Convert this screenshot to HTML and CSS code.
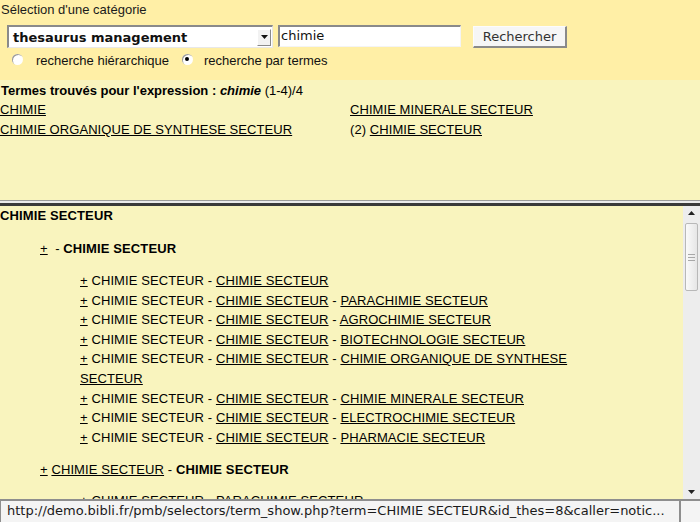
FILE: index.html
```html
<!DOCTYPE html>
<html lang="fr">
<head>
<meta charset="utf-8">
<title>Sélection</title>
<link rel="stylesheet" href="styles.css">
</head>
<body>
<div class="page">
  <div class="top">
    <div class="label">Sélection d'une catégorie</div>
    <div class="form-row">
      <div class="select">
        <span class="select-text">thesaurus management</span>
        <span class="drop"><svg width="7" height="4" viewBox="0 0 7 4"><path d="M0 0H7L3.5 4Z" fill="#111"/></svg></span>
      </div>
      <div class="input">chimie</div>
      <div class="button">Rechercher</div>
    </div>
    <div class="radio-row">
      <span class="radio"></span><span class="radio-label">recherche hiérarchique</span>
      <span class="radio checked"></span><span class="radio-label second">recherche par termes</span>
    </div>
  </div>

  <div class="middle">
    <div class="found"><b>Termes trouvés pour l'expression : <i>chimie</i></b> (1-4)/4</div>
    <div class="results">
      <div class="cell"><a href="#">CHIMIE</a></div>
      <div class="cell"><a href="#">CHIMIE MINERALE SECTEUR</a></div>
      <div class="cell"><a href="#">CHIMIE ORGANIQUE DE SYNTHESE SECTEUR</a></div>
      <div class="cell">(2) <a href="#">CHIMIE SECTEUR</a></div>
    </div>
  </div>

  <div class="sep"></div>

  <div class="bottom">
    <div class="content">
      <div class="head"><b>CHIMIE SECTEUR</b></div>
      <div class="l1"><a href="#">+</a>&nbsp; - <b>CHIMIE SECTEUR</b></div>
      <div class="l2">
        <div><a href="#">+</a> CHIMIE SECTEUR - <a href="#">CHIMIE SECTEUR</a></div>
        <div><a href="#">+</a> CHIMIE SECTEUR - <a href="#">CHIMIE SECTEUR</a> - <a href="#">PARACHIMIE SECTEUR</a></div>
        <div><a href="#">+</a> CHIMIE SECTEUR - <a href="#">CHIMIE SECTEUR</a> - <a href="#">AGROCHIMIE SECTEUR</a></div>
        <div><a href="#">+</a> CHIMIE SECTEUR - <a href="#">CHIMIE SECTEUR</a> - <a href="#">BIOTECHNOLOGIE SECTEUR</a></div>
        <div><a href="#">+</a> CHIMIE SECTEUR - <a href="#">CHIMIE SECTEUR</a> - <a href="#">CHIMIE ORGANIQUE DE SYNTHESE SECTEUR</a></div>
        <div><a href="#">+</a> CHIMIE SECTEUR - <a href="#">CHIMIE SECTEUR</a> - <a href="#">CHIMIE MINERALE SECTEUR</a></div>
        <div><a href="#">+</a> CHIMIE SECTEUR - <a href="#">CHIMIE SECTEUR</a> - <a href="#">ELECTROCHIMIE SECTEUR</a></div>
        <div><a href="#">+</a> CHIMIE SECTEUR - <a href="#">CHIMIE SECTEUR</a> - <a href="#">PHARMACIE SECTEUR</a></div>
      </div>
      <div class="l1 next"><a href="#">+</a> <a href="#">CHIMIE SECTEUR</a> - <b>CHIMIE SECTEUR</b></div>
      <div class="l2 next">
        <div><a href="#">+</a> CHIMIE SECTEUR - <a href="#">PARACHIMIE SECTEUR</a></div>
        <div><a href="#">+</a> CHIMIE SECTEUR - <a href="#">AGROCHIMIE SECTEUR</a></div>
      </div>
    </div>
    <div class="scrollbar">
      <div class="arrow"><svg width="7" height="4" viewBox="0 0 7 4"><path d="M0 4H7L3.5 0Z" fill="#222"/></svg></div>
      <div class="track">
        <div class="thumb"><span class="grip"></span><span class="grip"></span><span class="grip"></span></div>
      </div>
      <div class="arrow"><svg width="7" height="4" viewBox="0 0 7 4"><path d="M0 0H7L3.5 4Z" fill="#222"/></svg></div>
    </div>
  </div>

  <div class="status">
    <div class="status-text">http://demo.bibli.fr/pmb/selectors/term_show.php?term=CHIMIE SECTEUR&amp;id_thes=8&amp;caller=notic...</div>
    <div class="status-box"></div>
  </div>
</div>
</body>
</html>
```

FILE: styles.css
```css
html, body {
  margin: 0;
  padding: 0;
}

body {
  font-family: "Liberation Sans", Arial, sans-serif;
  font-size: 13px;
  color: #000;
}

a {
  color: #000;
  text-decoration: underline;
}

.page {
  width: 700px;
  height: 522px;
  overflow: hidden;
  display: flex;
  flex-direction: column;
}

/* ---------- top frame ---------- */
.top {
  height: 80px;
  flex: none;
  background: #ffefa6;
  box-sizing: border-box;
  padding-top: 2px;
}

.label {
  line-height: 16px;
  padding-left: 1px;
  color: #1a1a1a;
}

.form-row {
  display: flex;
  align-items: flex-start;
  margin-top: 7px;
  padding-left: 7px;
}

.select {
  width: 266px;
  height: 23px;
  box-sizing: border-box;
  background: #fff;
  border-top: 2px solid #8a8a8a;
  border-left: 2px solid #8a8a8a;
  border-right: 1px solid #e8e8e8;
  border-bottom: 1px solid #e8e8e8;
  display: flex;
  align-items: center;
  justify-content: space-between;
  font-family: "DejaVu Sans", sans-serif;
  font-weight: bold;
  font-size: 13px;
  color: #111;
}

.select-text {
  padding-left: 4px;
}

.drop {
  width: 14px;
  height: 17px;
  margin-right: 1px;
  box-sizing: border-box;
  background: #f2f2f2;
  border-top: 1px solid #fff;
  border-left: 1px solid #fff;
  border-right: 1px solid #8a8a8a;
  border-bottom: 1px solid #8a8a8a;
  display: flex;
  align-items: center;
  justify-content: center;
}

.input {
  width: 183px;
  height: 22px;
  margin-left: 5px;
  box-sizing: border-box;
  background: #fff;
  border-top: 2px solid #8a8a8a;
  border-left: 2px solid #8a8a8a;
  border-right: 1px solid #f4f4f4;
  border-bottom: 1px solid #f4f4f4;
  font-family: "DejaVu Sans", sans-serif;
  font-size: 13px;
  line-height: 18px;
  padding-left: 1px;
  color: #111;
}

.button {
  width: 94px;
  height: 22px;
  margin-left: 12px;
  margin-top: 1px;
  box-sizing: border-box;
  background: #f6f6f6;
  border-top: 1px solid #fcfcfc;
  border-left: 1px solid #fcfcfc;
  border-right: 2px solid #8a8a8a;
  border-bottom: 2px solid #8a8a8a;
  font-family: "DejaVu Sans", sans-serif;
  font-size: 13px;
  line-height: 19px;
  text-align: center;
  color: #333;
}

.radio-row {
  display: flex;
  align-items: center;
  margin-top: 5px;
  height: 14px;
  color: #111;
}

.radio {
  width: 11px;
  height: 11px;
  border-radius: 50%;
  background: #fff;
  box-shadow: inset 1px 1px 0 #9a9a9a;
  box-sizing: border-box;
  margin-left: 12px;
  display: flex;
  align-items: center;
  justify-content: center;
  position: relative;
  top: -1px;
}

.radio.checked {
  margin-left: 13px;
}

.radio.checked::after {
  content: "";
  width: 4px;
  height: 4px;
  background: #000;
  border-radius: 50%;
}

.radio-label {
  margin-left: 13px;
}

.radio-label.second {
  margin-left: 11px;
}

/* ---------- middle frame ---------- */
.middle {
  height: 120px;
  flex: none;
  background: #f9f4be;
  box-sizing: border-box;
  padding-top: 1px;
}

.found {
  line-height: 19px;
  padding-left: 1px;
}

.results {
  display: grid;
  grid-template-columns: 350px 350px;
  line-height: 20px;
  letter-spacing: 0.07px;
}

/* ---------- separator ---------- */
.sep {
  flex: none;
  height: 6px;
  box-sizing: border-box;
  border-top: 1px solid #9c9c9c;
  border-bottom: 3px solid #3a3a3a;
  background: #ececec;
}

/* ---------- bottom frame ---------- */
.bottom {
  flex: 1;
  min-height: 0;
  display: flex;
  background: #f9f4be;
}

.content {
  flex: 1;
  overflow: hidden;
  line-height: 19.6px;
  letter-spacing: 0.1px;
}

.content b {
  letter-spacing: 0.12px;
}

.head {
  line-height: 19px;
  margin-bottom: 1px;
}

.l1 {
  margin-top: 14px;
  padding-left: 40px;
}

.l1.next {
  margin-top: 13px;
}

.l2 {
  margin-top: 12.5px;
  margin-left: 80px;
  width: 520px;
}

.l2.next {
  margin-top: 11px;
}

.scrollbar {
  width: 17px;
  flex: none;
  background: #ededed;
  display: flex;
  flex-direction: column;
  align-items: center;
}

.arrow {
  height: 14px;
  width: 17px;
  display: flex;
  align-items: center;
  justify-content: center;
  flex: none;
}

.track {
  flex: 1;
  width: 17px;
  padding-top: 3px;
  box-sizing: border-box;
  display: flex;
  justify-content: center;
}

.thumb {
  width: 13px;
  height: 68px;
  box-sizing: border-box;
  border: 1px solid #b8b8b8;
  border-radius: 2px;
  background: linear-gradient(to right, #fafafa, #e6e6e6);
  display: flex;
  flex-direction: column;
  align-items: center;
  justify-content: center;
  gap: 2px;
}

.grip {
  width: 7px;
  height: 1px;
  background: #a8a8a8;
}

/* ---------- status bar ---------- */
.status {
  flex: none;
  height: 23px;
  box-sizing: border-box;
  display: flex;
  gap: 2px;
  background: #8e8e8e;
  padding-top: 2px;
}

.status-text {
  flex: 1;
  background: #f4f4f4;
  margin-left: 1px;
  padding-left: 6px;
  font-family: "DejaVu Sans", sans-serif;
  font-size: 13px;
  line-height: 20px;
  color: #1a1a1a;
  white-space: nowrap;
  overflow: hidden;
}

.status-box {
  width: 19px;
  flex: none;
  background: #f4f4f4;
}
```
